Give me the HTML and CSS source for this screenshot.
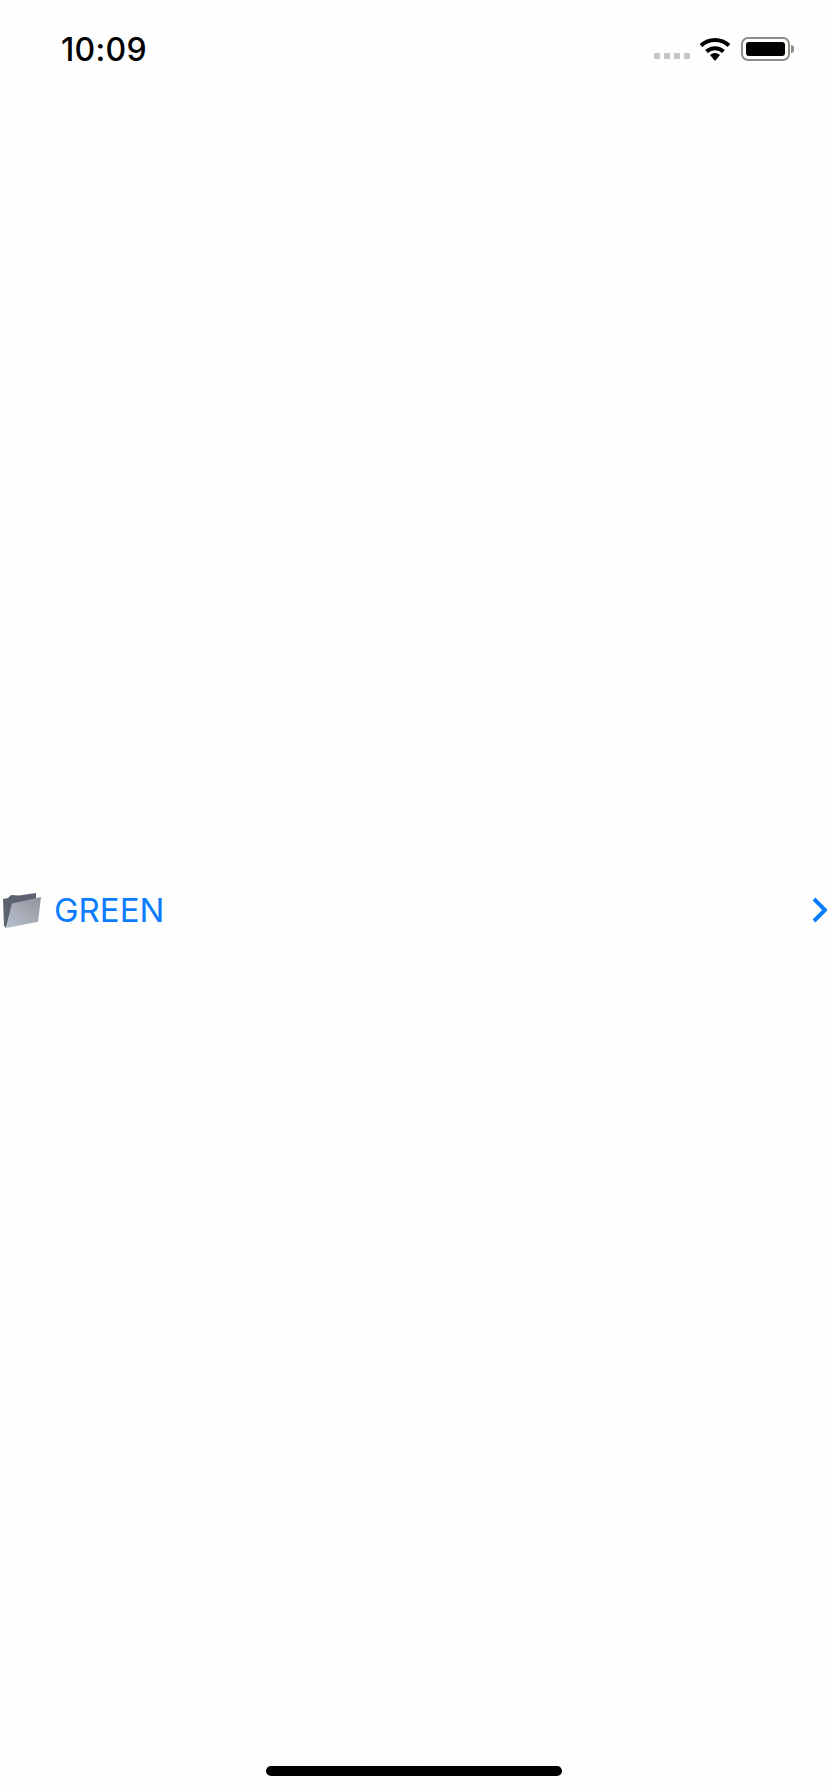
FILE: index.html
```html
<!DOCTYPE html>
<html lang="en">
<head>
  <meta charset="UTF-8" />
  <meta name="viewport" content="width=device-width, initial-scale=1.0"/>
  <title>Folders</title>
  <link rel="stylesheet" href="styles.css">
</head>
<body>
  <div class="screen">
    <div class="status-bar">
      <span class="clock">10:09</span>
      <div class="status-icons">
        <div class="signal"><i></i><i></i><i></i><i></i></div>
        <svg class="wifi" width="32" height="24" viewBox="0 0 32 24">
          <path d="M16 24l-5-6a7.500 7.500 0 0 1 10 0z" fill="#000"/>
          <path d="M7.500 14.500a12.500 12.500 0 0 1 17 0" fill="none" stroke="#000" stroke-width="4"/>
          <path d="M2 8.500a20.500 20.500 0 0 1 28 0" fill="none" stroke="#000" stroke-width="4"/>
        </svg>
        <div class="battery"><div class="battery-fill"></div></div>
        <div class="battery-nub"></div>
      </div>
    </div>

    <div class="list">
      <a class="row" href="#">
        <svg class="folder" width="38" height="36" viewBox="0 0 38 36">
          <defs>
            <linearGradient id="folderFront" x1="0" y1="1" x2="1" y2="0">
              <stop offset="0" stop-color="#b8c0ce"/>
              <stop offset="0.5" stop-color="#a5aab5"/>
              <stop offset="1" stop-color="#8f939d"/>
            </linearGradient>
          </defs>
          <path d="M0 7l5-1 3-3 8 0.500L33 1v6L9 13 3 36l-2-2z" fill="#5c6270"/>
          <path d="M9 11.500L38 5l-3 24.700L3 36z" fill="url(#folderFront)"/>
        </svg>
        <span class="row-label">GREEN</span>
        <svg class="chevron" width="15" height="26" viewBox="0 0 15 26">
          <path d="M2 2l11 11L2 24" fill="none" stroke="#0a7cff" stroke-width="4"/>
        </svg>
      </a>
    </div>

    <div class="home-bar"><div class="home-indicator"></div></div>
  </div>
</body>
</html>
```

FILE: styles.css
```css
:root {
  --bg: #fefefe;
  --blue: #0a7cff;
}

body {
  margin: 0;
  background-color: var(--bg);
  font-family: 'Inter', 'Liberation Sans', sans-serif;
}

.screen {
  height: 1792px;
  display: flex;
  flex-direction: column;
  background-color: var(--bg);
  background-image: radial-gradient(circle, #fdfde6 0.8px, transparent 1px);
  background-size: 7px 7px;
}

.status-bar {
  height: 88px;
  padding: 10px 34px 0 61px;
  box-sizing: border-box;
  display: flex;
  justify-content: space-between;
  align-items: center;
}

.clock {
  font-size: 32px;
  font-weight: 550;
  letter-spacing: 0.3px;
  color: #000;
}

.status-icons {
  display: flex;
  align-items: center;
}

.signal {
  display: flex;
  gap: 4px;
  margin-top: 14px;
  margin-right: 9px;
}

.signal i {
  width: 6px;
  height: 6px;
  background: #c4c4c4;
}

.wifi {
  margin-right: 10px;
}

.battery {
  width: 49px;
  height: 24px;
  box-sizing: border-box;
  padding: 3px;
  border: 2px solid #8e8e86;
  border-radius: 7px;
}

.battery-fill {
  height: 100%;
  background: #000;
  border-radius: 3px;
}

.battery-nub {
  width: 3px;
  height: 8px;
  margin-left: 1px;
  background: #8e8e86;
  border-radius: 0 3px 3px 0;
}

.list {
  flex: 1;
  display: flex;
  flex-direction: column;
  justify-content: center;
  padding-bottom: 18px;
}

.row {
  display: flex;
  align-items: center;
  padding: 0 1px 0 3px;
  color: var(--blue);
  text-decoration: none;
}

.row-label {
  flex: 1;
  margin-left: 13px;
  font-size: 33px;
  line-height: 40px;
}

.home-bar {
  height: 42px;
  display: flex;
  justify-content: center;
  padding-top: 16px;
  box-sizing: border-box;
}

.home-indicator {
  width: 296px;
  height: 10px;
  background: #000;
  border-radius: 5px;
}
```
